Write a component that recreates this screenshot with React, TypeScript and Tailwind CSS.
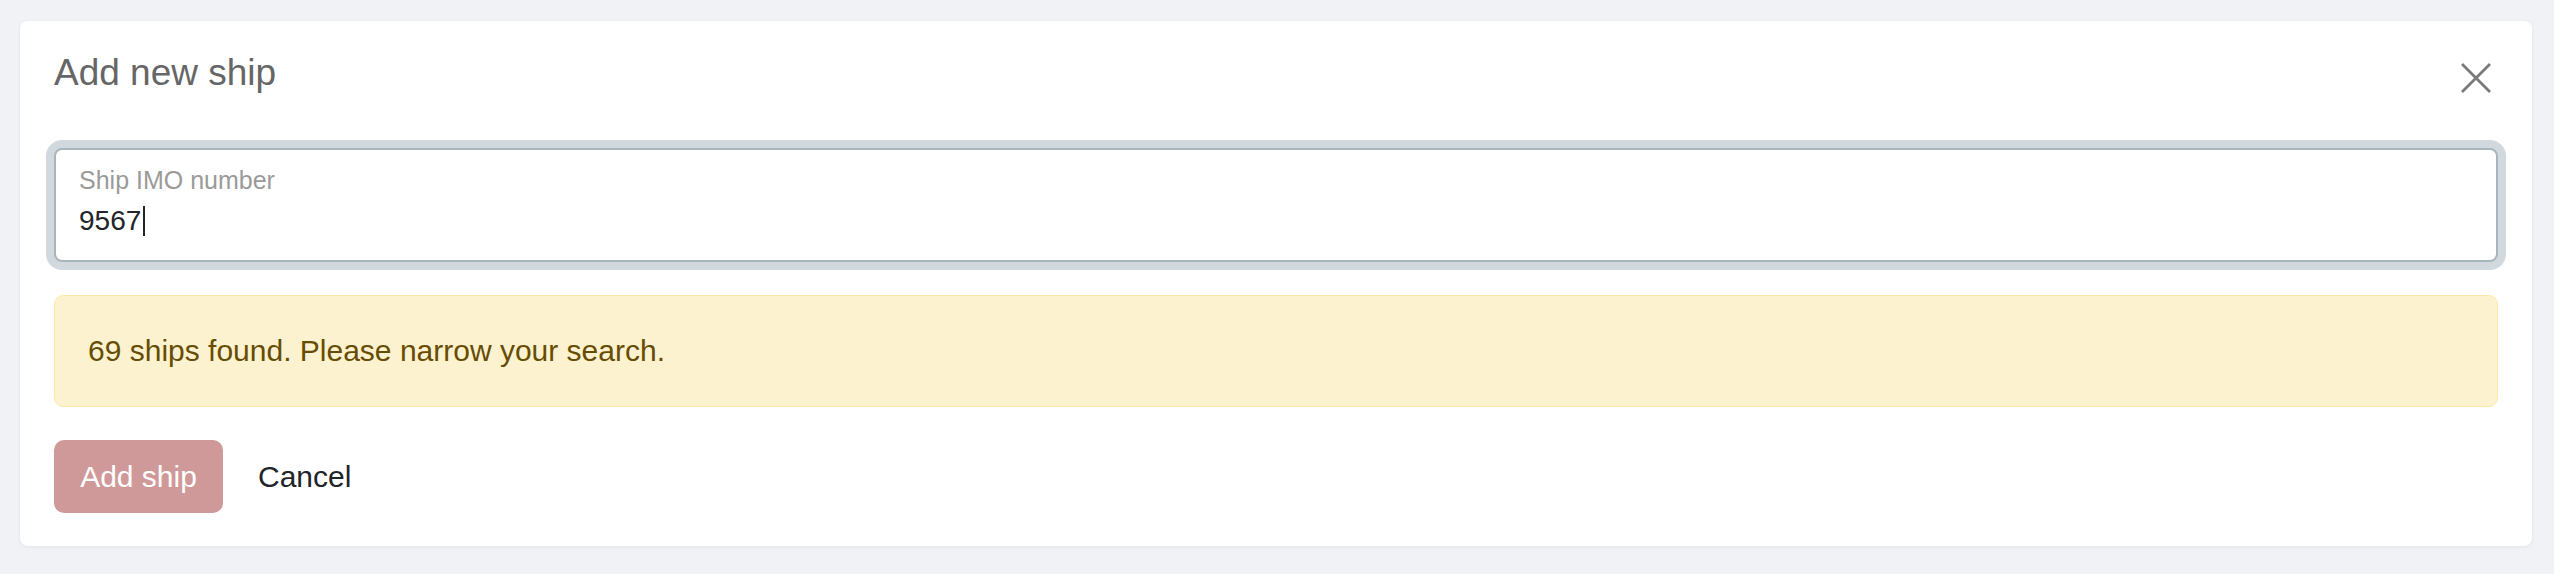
export default function App() {
  return (
    <main className="h-[574px] w-full overflow-hidden bg-[#f0f2f5] pl-[20px] pr-[22px] pt-[21px] font-['Liberation_Sans',Arial,sans-serif]">
      <div className="rounded-[8px] bg-white px-[34px] pt-[30px] pb-[33px] shadow-[0_1px_4px_rgba(0,0,0,0.06)]">
        {/* header */}
        <div className="flex h-[44px] items-start justify-between">
          <h2 className="text-[37px] leading-[44px] text-[#666666]">Add new ship</h2>
          <button className="mt-[12px] mr-[7px] text-[#7a7a7a]">
            <svg width="30" height="30" viewBox="0 0 30 30" fill="none" stroke="currentColor" strokeWidth="2.8">
              <path d="M1 1L29 29M29 1L1 29" />
            </svg>
          </button>
        </div>

        {/* IMO field */}
        <div className="mt-[53px] h-[114px] rounded-[8px] border-2 border-[#a9b5bc] bg-white pl-[23px] pt-[15px] shadow-[0_0_0_8px_#d1d9de]">
          <div className="text-[25px] leading-[30px] text-[#9a9a9a]">Ship IMO number</div>
          <div className="mt-[9px] flex items-center text-[28px] leading-[34px] text-[#222529]">
            <span>9567</span>
            <span className="ml-[2px] inline-block h-[30px] w-[2px] bg-[#222529]" />
          </div>
        </div>

        {/* warning */}
        <div className="mt-[33px] rounded-[9px] border border-[#fde9ab] bg-[#fdf2cf] pl-[33px] py-[37px] text-[30px] leading-[36px] text-[#664d03]">
          69 ships found. Please narrow your search.
        </div>

        {/* actions */}
        <div className="mt-[33px] flex items-center">
          <button className="h-[73px] w-[169px] rounded-[10px] bg-[#d09999] text-[30px] text-white">
            Add ship
          </button>
          <button className="ml-[35px] text-[30px] text-[#212529]">Cancel</button>
        </div>
      </div>
    </main>
  );
}
